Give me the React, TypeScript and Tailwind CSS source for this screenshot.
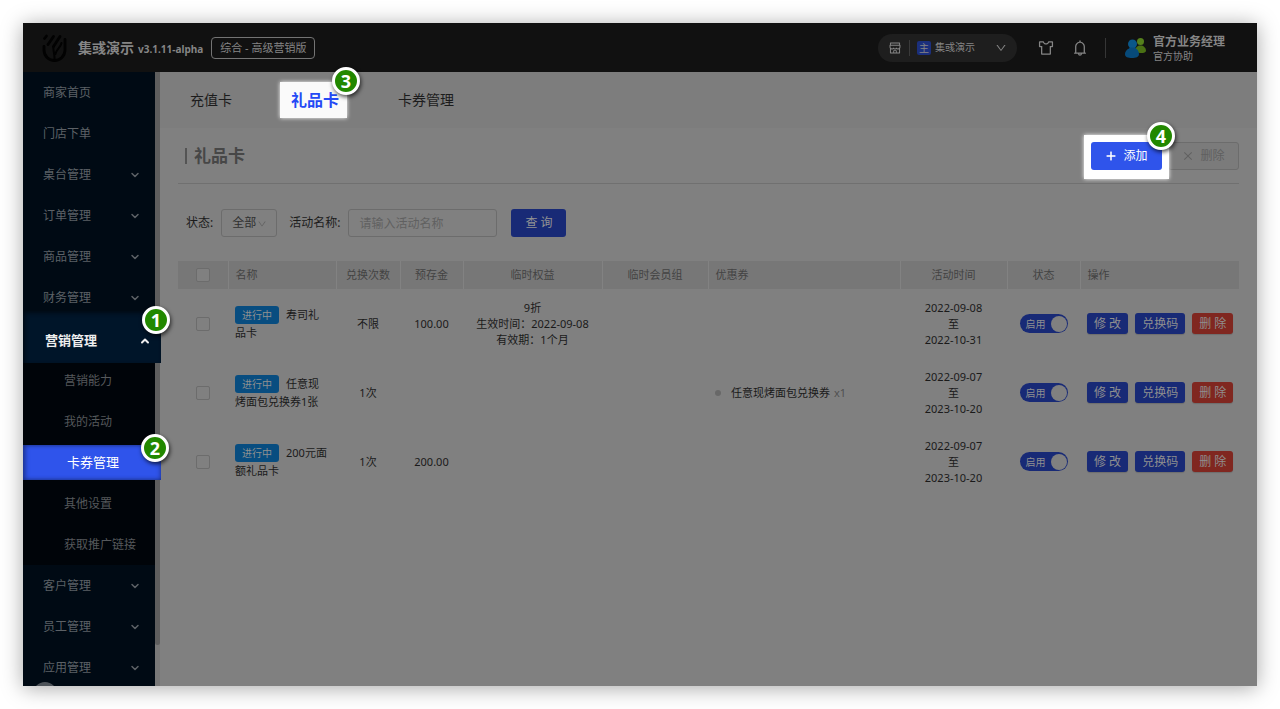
import { useState } from "react";
import {
  AiOutlineBell,
  AiOutlineClose,
  AiOutlineDown,
  AiOutlinePlus,
  AiOutlineShop,
  AiOutlineSkin,
} from "react-icons/ai";
import { FiChevronDown, FiChevronUp } from "react-icons/fi";

const topMenu = [
  { label: "商家首页", arrow: false },
  { label: "门店下单", arrow: false },
  { label: "桌台管理", arrow: true },
  { label: "订单管理", arrow: true },
  { label: "商品管理", arrow: true },
  { label: "财务管理", arrow: true },
];

const subMenu = ["营销能力", "我的活动", "卡券管理", "其他设置", "获取推广链接"];

const bottomMenu = [
  { label: "客户管理", arrow: true },
  { label: "员工管理", arrow: true },
  { label: "应用管理", arrow: true },
];

const cards = [
  {
    id: 1,
    name: "寿司礼品卡",
    times: "不限",
    deposit: "100.00",
    rights: ["9折", "生效时间：2022-09-08", "有效期：1个月"],
    coupon: null,
    start: "2022-09-08",
    end: "2022-10-31",
  },
  {
    id: 2,
    name: "任意现烤面包兑换券1张",
    times: "1次",
    deposit: "",
    rights: [],
    coupon: { name: "任意现烤面包兑换券", count: "x1" },
    start: "2022-09-07",
    end: "2023-10-20",
  },
  {
    id: 3,
    name: "200元面额礼品卡",
    times: "1次",
    deposit: "200.00",
    rights: [],
    coupon: null,
    start: "2022-09-07",
    end: "2023-10-20",
  },
];

const StepBadge = ({ step, className }: { step: number; className: string }) => (
  <span
    className={`absolute z-30 flex size-7 items-center justify-center rounded-full border-3 border-white bg-[#228800] font-['Noto_Sans','Open_Sans',sans-serif] text-lg leading-none font-bold text-white shadow-[1px_2px_4px_rgba(0,0,0,0.7)] ${className}`}
  >
    {step}
  </span>
);

const Logo = () => (
  <svg viewBox="0 0 26 28" className="h-7 w-[26px]" fill="none" stroke="#020202" strokeLinecap="round">
    <path d="M2 12.500v3.500a10.500 10.500 0 0 0 21 0V5.500" strokeWidth="2.800" />
    <path d="M2.500 4.500l2-2.500M6 10.500l5.500-8M11.500 12.500l6.500-10" strokeWidth="2.800" />
    <path d="M11.500 12.500c-1 3 1 5 1 12M19.500 9c-1 5-5.500 6.500-6 11" strokeWidth="2" />
  </svg>
);

const Avatar = () => (
  <svg viewBox="0 0 22 22" className="size-[22px] shrink-0">
    <circle cx="16.500" cy="4.500" r="3.500" fill="#55801c" />
    <path d="M11 13c0-2 2-3.500 4-4.500h3c2 1 4 2.500 4 5 0 2-2 2.500-5 2.500s-6-1-6-3z" fill="#4a7014" />
    <circle cx="8.500" cy="7" r="4.500" fill="#0a5788" />
    <path d="M1 17.500C1 13.500 4 12 6.500 10.500h4c2.500 1.500 4.500 3 4.500 6.500 0 3-3 4-7 4s-7-1-7-3.500z" fill="#074a7a" />
  </svg>
);

const MenuItem = ({ label, arrow }: { label: string; arrow: boolean }) => (
  <li>
    <a href="#" className="flex h-[41px] items-center justify-between pr-3.5 pl-5 text-xs text-[#5c6166]">
      {label}
      {arrow && <FiChevronDown className="size-3" strokeWidth={3} />}
    </a>
  </li>
);

const Header = () => (
  <header className="flex h-[49px] shrink-0 items-center bg-[#111] pr-8 pl-[19px] text-[#858585]">
    <Logo />
    <div className="ml-2.5 flex items-baseline gap-1 font-bold">
      <span className="text-sm">集彧演示</span>
      <span className="text-[10px]">v3.1.11-alpha</span>
    </div>
    <span className="ml-2 rounded border border-[#747474] px-2 text-[11px] leading-5">综合 - 高级营销版</span>
    <div className="ml-auto flex items-center">
      <button type="button" className="flex h-7 items-center rounded-full bg-[#1e1e1e] px-2.5 text-[10px]">
        <AiOutlineShop className="size-3.5" />
        <span className="mx-[7px] h-4 w-px bg-[#3a3a3a]" />
        <span className="flex size-3.5 items-center justify-center rounded-xs bg-[#1b2f7c] text-[10px] leading-none">
          主
        </span>
        <span className="mr-5 ml-1">集彧演示</span>
        <AiOutlineDown className="size-3" />
      </button>
      <button type="button" aria-label="主题" className="ml-5">
        <AiOutlineSkin className="size-[18px]" />
      </button>
      <button type="button" aria-label="通知" className="ml-4">
        <AiOutlineBell className="size-[18px]" />
      </button>
      <span className="mr-[18px] ml-4 h-5 w-px bg-[#363636]" />
      <Avatar />
      <div className="ml-[7px]">
        <div className="text-xs leading-4 font-bold">官方业务经理</div>
        <div className="text-[10px] leading-3">官方协助</div>
      </div>
    </div>
  </header>
);

const Sidebar = () => (
  <aside className="relative z-20 flex shrink-0">
    <nav className="w-[132px] bg-[#000a14]">
      <ul>
        {topMenu.map((item) => (
          <MenuItem key={item.label} {...item} />
        ))}
        <li>
          <div className="relative h-[42px]">
            <a
              href="#"
              className="absolute -top-[7px] -right-1.5 -bottom-[3px] left-0 flex items-center justify-between bg-[#001529] pt-2 pr-2.5 pl-[22px] text-[13px] font-bold text-[#eee] shadow-[inset_2px_2px_4px_#000a14]"
            >
              营销管理
              <FiChevronUp className="size-3" strokeWidth={4} />
            </a>
            <StepBadge step={1} className="-top-3 -right-[15px]" />
          </div>
          <ul className="bg-[#000409]">
            {subMenu.map((label) =>
              label === "卡券管理" ? (
                <li key={label} className="relative h-[41px]">
                  <a
                    href="#"
                    className="absolute -right-1.5 inset-y-[3px] left-0 flex items-center bg-[#2f54eb] pl-11 text-[13px] text-white shadow-[inset_3px_0_4px_rgba(0,0,0,0.3),inset_-1px_0_4px_rgba(0,0,0,0.3)]"
                  >
                    {label}
                  </a>
                  <StepBadge step={2} className="-top-2 -right-[14px]" />
                </li>
              ) : (
                <li key={label}>
                  <a href="#" className="flex h-[41px] items-center pl-[41px] text-xs text-[#55585b]">
                    {label}
                  </a>
                </li>
              )
            )}
          </ul>
        </li>
        {bottomMenu.map((item) => (
          <MenuItem key={item.label} {...item} />
        ))}
      </ul>
      {/* collapse handle peeking out at the bottom */}
      <span className="absolute -bottom-5 left-2.5 size-6 rounded-full bg-[#4d5359]" />
    </nav>
    <div className="w-[5px] bg-[#787878] pb-[41px]">
      <div className="h-full rounded-b bg-[#5e5e5e]" />
    </div>
  </aside>
);

const Tabs = () => (
  <nav className="flex h-14 items-center gap-[59px] bg-[#7d7d7d] pl-[30px] text-sm text-[#1c1c1c]">
    <a href="#">充值卡</a>
    <a href="#" className="relative text-base font-bold text-[#2449f5]">
      <span className="absolute -inset-y-1.5 -right-2 -left-[11px] bg-[#fafafa] shadow-[0_0_4px_#fafafa]" />
      <span className="relative">礼品卡</span>
      <StepBadge step={3} className="-top-[21px] -right-[21px]" />
    </a>
    <a href="#">卡券管理</a>
  </nav>
);

const Check = ({ label }: { label: string }) => (
  <input
    type="checkbox"
    aria-label={label}
    className="mx-auto block size-3.5 appearance-none rounded-xs border border-[#6c6c6c] bg-[#808080] checked:bg-[#182a76]"
  />
);

const actionClass =
  "h-[21px] rounded-[3px] px-[7px] text-xs leading-none text-[#8f8f8f] shadow-[0_1px_1px_rgba(0,0,0,0.15)]";

const CardTable = () => {
  const [enabled, setEnabled] = useState<Record<number, boolean>>({ 1: true, 2: true, 3: true });

  return (
    <table className="mt-6 w-full table-fixed text-center text-[11px] leading-4 text-[#1a1a1a]">
      <colgroup>
        <col className="w-[50px]" />
        <col className="w-[108px]" />
        <col className="w-16" />
        <col className="w-[63px]" />
        <col className="w-[139px]" />
        <col className="w-[106px]" />
        <col />
        <col className="w-[107px]" />
        <col className="w-[73px]" />
        <col className="w-[159px]" />
      </colgroup>
      <thead>
        <tr className="h-7 bg-[#777] text-[#434343] *:border-r *:border-[#828282] *:font-normal *:last:border-0">
          <th>
            <Check label="全选" />
          </th>
          <th className="pl-[7px] text-left">名称</th>
          <th>兑换次数</th>
          <th>预存金</th>
          <th>临时权益</th>
          <th>临时会员组</th>
          <th className="pl-[7px] text-left">优惠券</th>
          <th>活动时间</th>
          <th>状态</th>
          <th className="pl-[7px] text-left">操作</th>
        </tr>
      </thead>
      <tbody>
        {cards.map((card) => (
          <tr key={card.id} className="h-[69px]">
            <td>
              <Check label={card.name} />
            </td>
            <td className="px-[7px] text-left leading-[18px]">
              <span className="mr-[7px] inline-block rounded-[3px] bg-[#084d80] px-[7px] text-[10px] text-[#909090]">
                进行中
              </span>
              {card.name}
            </td>
            <td>{card.times}</td>
            <td>{card.deposit}</td>
            <td>
              {card.rights.map((line) => (
                <div key={line}>{line}</div>
              ))}
            </td>
            <td />
            <td className="pl-[7px] text-left">
              {card.coupon && (
                <div className="flex items-center">
                  <span className="mr-2.5 size-1.5 rounded-full bg-[#686868]" />
                  {card.coupon.name}
                  <span className="ml-1 text-[#505050]">{card.coupon.count}</span>
                </div>
              )}
            </td>
            <td>
              {card.start}
              <br />至<br />
              {card.end}
            </td>
            <td>
              <button
                type="button"
                role="switch"
                aria-checked={enabled[card.id]}
                onClick={() => setEnabled({ ...enabled, [card.id]: !enabled[card.id] })}
                className={`mx-auto flex h-[19px] w-12 items-center justify-between rounded-full pr-px pl-1.5 text-[10px] text-[#8f8f8f] ${
                  enabled[card.id] ? "bg-[#182a76]" : "bg-[#5f5f5f]"
                }`}
              >
                {enabled[card.id] ? "启用" : "停用"}
                <span className="size-4 rounded-full bg-[#808080]" />
              </button>
            </td>
            <td>
              <div className="flex gap-[7px] pl-[7px]">
                <button type="button" className={`${actionClass} bg-[#182a76]`}>
                  修 改
                </button>
                <button type="button" className={`${actionClass} bg-[#182a76]`}>
                  兑换码
                </button>
                <button type="button" className={`${actionClass} bg-[#802720]`}>
                  删 除
                </button>
              </div>
            </td>
          </tr>
        ))}
      </tbody>
    </table>
  );
};

export default function App() {
  return (
    <div className="flex h-screen bg-white p-[23px] font-['Noto_Sans','Noto_Sans_CJK_SC',sans-serif]">
      <div className="flex min-w-0 flex-1 flex-col overflow-hidden shadow-[0_2px_20px_rgba(0,0,0,0.35)]">
        <Header />
        <div className="flex min-h-0 flex-1">
          <Sidebar />
          <main className="min-w-0 flex-1 bg-[#808080]">
            <Tabs />
            <div className="px-[18px]">
              <div className="flex h-14 items-center justify-between border-b border-[#707070]">
                <h1 className="flex items-center gap-[7px] pl-[7px] text-[17px] font-bold text-[#474747]">
                  <span className="h-4 w-0.5 bg-[#545454]" />
                  礼品卡
                </h1>
                <div className="flex gap-1.5 text-xs">
                  <div className="relative z-10">
                    <span className="absolute -inset-x-[7px] -top-[7px] -bottom-[9px] bg-white shadow-[0_0_4px_white]" />
                    <button
                      type="button"
                      className="relative flex h-7 w-[71px] items-center justify-center gap-1.5 rounded-[3px] bg-[#2f54eb] text-white"
                    >
                      <AiOutlinePlus className="size-3" strokeWidth={50} />
                      添加
                    </button>
                    <StepBadge step={4} className="-top-5 -right-[13px]" />
                  </div>
                  <button
                    type="button"
                    disabled
                    className="flex h-7 w-[71px] items-center justify-center gap-1.5 rounded-[3px] border border-[#6c6c6c] bg-[#7b7b7b] text-[#606060]"
                  >
                    <AiOutlineClose className="size-3" />
                    删除
                  </button>
                </div>
              </div>
              <form className="mt-[25px] flex h-7 items-center pl-2 text-xs text-[#1c1c1c]">
                <label htmlFor="status" className="mr-2">
                  状态:
                </label>
                <span className="relative mr-3">
                  <select
                    id="status"
                    className="h-7 w-14 appearance-none rounded-[3px] border border-[#6c6c6c] bg-transparent pl-2.5 text-[#303030]"
                  >
                    <option>全部</option>
                  </select>
                  <AiOutlineDown className="pointer-events-none absolute top-2.5 right-2.5 size-2.5 text-[#606060]" />
                </span>
                <label htmlFor="name" className="mr-2">
                  活动名称:
                </label>
                <input
                  id="name"
                  placeholder="请输入活动名称"
                  className="mr-3.5 h-7 w-[149px] rounded-[3px] border border-[#6c6c6c] bg-transparent px-2.5 placeholder:text-[#606060]"
                />
                <button type="button" className="h-7 w-[55px] rounded-[3px] bg-[#182a76] text-[#939393]">
                  查 询
                </button>
              </form>
              <CardTable />
            </div>
          </main>
        </div>
      </div>
    </div>
  );
}
